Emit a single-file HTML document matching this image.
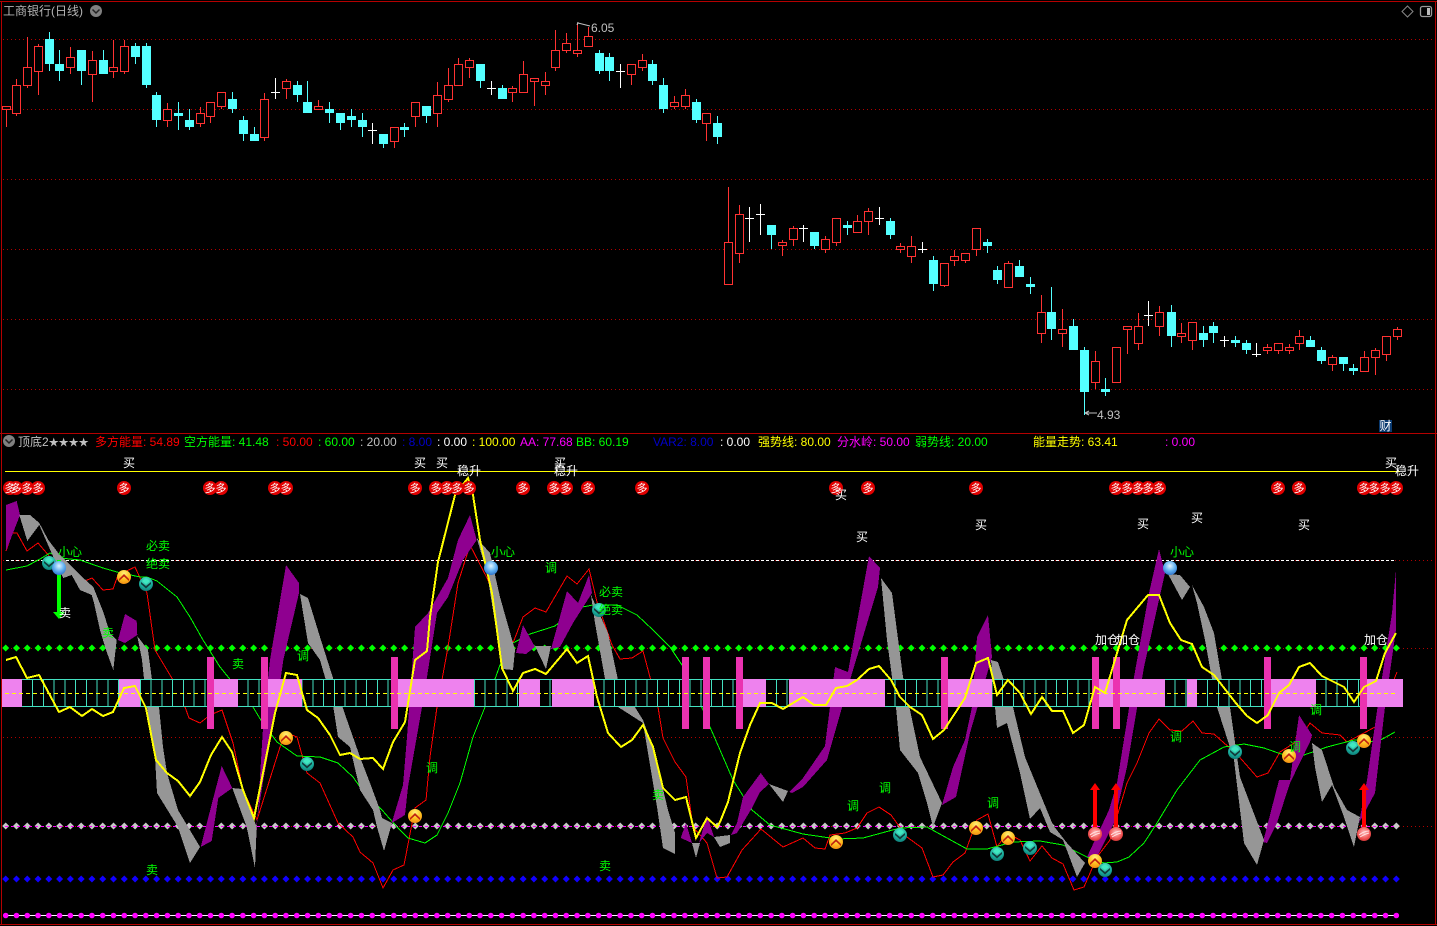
<!DOCTYPE html>
<html><head><meta charset="utf-8"><title>工商银行(日线)</title>
<style>
html,body{margin:0;padding:0;background:#000;width:1437px;height:926px;overflow:hidden}
svg{display:block;position:absolute;left:0;top:0}
text{font-family:"Liberation Sans","WenQuanYi Zen Hei","Noto Sans CJK SC",sans-serif;font-size:12px}
.m{text-anchor:middle}
</style></head><body>
<svg width="1437" height="926" viewBox="0 0 1437 926" xmlns="http://www.w3.org/2000/svg">
<defs>
<radialGradient id="go" cx=".5" cy=".25" r=".85"><stop offset="0" stop-color="#fff27a"/><stop offset=".5" stop-color="#ffc020"/><stop offset="1" stop-color="#f08010"/></radialGradient>
<radialGradient id="gt" cx=".5" cy=".25" r=".85"><stop offset="0" stop-color="#50e8c8"/><stop offset=".6" stop-color="#18a898"/><stop offset="1" stop-color="#0c6c6c"/></radialGradient>
<radialGradient id="gb" cx=".5" cy=".35" r=".75"><stop offset="0" stop-color="#e0f4ff"/><stop offset=".5" stop-color="#60b0f0"/><stop offset="1" stop-color="#2060c0"/></radialGradient>
<radialGradient id="gr" cx=".5" cy=".4" r=".75"><stop offset="0" stop-color="#ffc0c0"/><stop offset=".6" stop-color="#f05050"/><stop offset="1" stop-color="#b02020"/></radialGradient>
<g id="o"><circle r="7" fill="url(#go)"/><path d="M-5 2L0-3 5 2 5 4 0-.5-5 4z" fill="#c02010"/></g>
<g id="t"><circle r="7" fill="url(#gt)"/><path d="M-5-2L0 2 5-2 5 0 0 4.500-5 0z" fill="#123c3c"/><path d="M-4-3L0-5.500 4-3 0 0z" fill="#40e8c0"/></g>
<g id="b"><circle r="7" fill="url(#gb)"/></g>
<g id="r"><circle r="7" fill="url(#gr)"/><path d="M-5 1Q0-3 5-3M-4 3Q1 0 5-1" stroke="#ffe0e0" fill="none"/></g>

<path id="d10" d="M0-3.500l3.500 3.500-3.500 3.500-3.500-3.500zm10.780 0l3.500 3.500-3.500 3.500-3.500-3.500zm10.780 0l3.500 3.500-3.500 3.500-3.500-3.500zm10.780 0l3.500 3.500-3.500 3.500-3.500-3.500zm10.780 0l3.500 3.500-3.500 3.500-3.500-3.500zm10.780 0l3.500 3.500-3.500 3.500-3.500-3.500zm10.780 0l3.500 3.500-3.500 3.500-3.500-3.500zm10.780 0l3.500 3.500-3.500 3.500-3.500-3.500zm10.780 0l3.500 3.500-3.500 3.500-3.500-3.500zm10.780 0l3.500 3.500-3.500 3.500-3.500-3.500z"/>
<g id="drow"><use href="#d10" x="0"/><use href="#d10" x="107.800"/><use href="#d10" x="215.600"/><use href="#d10" x="323.400"/><use href="#d10" x="431.200"/><use href="#d10" x="539"/><use href="#d10" x="646.800"/><use href="#d10" x="754.600"/><use href="#d10" x="862.400"/><use href="#d10" x="970.200"/><use href="#d10" x="1078"/><use href="#d10" x="1185.800"/><use href="#d10" x="1293.600"/></g>

<g id="c10"><circle r="2.800"/><circle cx="10.780" r="2.800"/><circle cx="21.560" r="2.800"/><circle cx="32.340" r="2.800"/><circle cx="43.120" r="2.800"/><circle cx="53.900" r="2.800"/><circle cx="64.680" r="2.800"/><circle cx="75.460" r="2.800"/><circle cx="86.240" r="2.800"/><circle cx="97.020" r="2.800"/></g>
<g id="crow"><use href="#c10" x="0"/><use href="#c10" x="107.800"/><use href="#c10" x="215.600"/><use href="#c10" x="323.400"/><use href="#c10" x="431.200"/><use href="#c10" x="539"/><use href="#c10" x="646.800"/><use href="#c10" x="754.600"/><use href="#c10" x="862.400"/><use href="#c10" x="970.200"/><use href="#c10" x="1078"/><use href="#c10" x="1185.800"/><use href="#c10" x="1293.600"/></g>

<path id="v10" d="M0 0v28m10.780-28v28m10.780-28v28m10.780-28v28m10.780-28v28m10.780-28v28m10.780-28v28m10.780-28v28m10.780-28v28m10.780-28v28"/>
</defs>

<!-- grid -->
<g stroke="#b00000" stroke-width="1" stroke-dasharray="1 3" fill="none" shape-rendering="crispEdges">
<path d="M3 39.500H1434M3 109.500H1434M3 179.500H1434M3 249.500H1434M3 319.500H1434M3 389.500H1434"/>
<path d="M3 560.500H1434M3 648.500H1434M3 737.500H1434M3 826.500H1434"/>
</g>

<!-- borders -->
<g fill="#b40000" shape-rendering="crispEdges">
<rect x="0" y="1" width="1437" height="1"/>
<rect x="1" y="1" width="1" height="924"/>
<rect x="1435" y="1" width="1" height="924"/>
<rect x="0" y="433" width="1437" height="1"/>
<rect x="0" y="924" width="1437" height="1"/>
</g>

<!-- candles -->
<g shape-rendering="crispEdges" fill="none" stroke-width="1">
<path stroke="#ff3232" d="M6.500 106V127M16.500 79V116M27.500 37V88M38.500 44V95M70.500 47V74M92.500 51V102M113.500 40V78M124.500 40V74M167.500 103V127M200.500 107V127M210.500 102V123M221.500 92V109M264.500 93V141M286.500 79V99M318.500 100V110M394.500 127V148M415.500 102V127M437.500 82V127M448.500 68V102M458.500 58V86M469.500 58V78M512.500 86V102M523.500 61V93M534.500 78V106M545.500 72V95M555.500 30V71M566.500 33V53M577.500 24V57M588.500 27V47M631.500 64V85M642.500 54V71M674.500 96V109M685.500 89V109M706.500 113V141M728.500 187V285M739.500 205V263M782.500 240V256M793.500 226V246M825.500 236V253M836.500 218V246M857.500 215V233M868.500 208V235M900.500 243V253M911.500 236V263M944.500 263V287M954.500 250V266M965.500 253V263M976.500 228V256M1008.500 261V288M1041.500 295V343M1062.500 309V347M1095.500 351V389M1116.500 347V383M1127.500 326V354M1138.500 313V350M1159.500 306V336M1181.500 323V343M1192.500 322V350M1267.500 344V354M1278.500 343V354M1289.500 344V354M1299.500 330V350M1332.500 355V371M1364.500 351V372M1375.500 348V375M1386.500 336V361M1397.500 327V340"/>
<path stroke="#ff3232" fill="#000" d="M2.500 106.500h8v3h-8zM12.500 85.500h8v28h-8zM23.500 67.500h8v18h-8zM34.500 46.500h8v25h-8zM66.500 57.500h8v10h-8zM88.500 60.500h8v14h-8zM109.500 67.500h8v4h-8zM120.500 46.500h8v25h-8zM163.500 109.500h8v11h-8zM196.500 113.500h8v10h-8zM206.500 102.500h8v14h-8zM217.500 92.500h8v14h-8zM260.500 99.500h8v38h-8zM282.500 81.500h8v7h-8zM314.500 106.500h8v3h-8zM390.500 127.500h8v14h-8zM411.500 102.500h8v14h-8zM433.500 95.500h8v18h-8zM444.500 85.500h8v14h-8zM454.500 64.500h8v21h-8zM465.500 60.500h8v7h-8zM508.500 88.500h8v4h-8zM519.500 74.500h8v18h-8zM530.500 78.500h8v3h-8zM541.500 81.500h8v4h-8zM551.500 50.500h8v17h-8zM562.500 43.500h8v7h-8zM573.500 50.500h8v3h-8zM584.500 36.500h8v10h-8zM627.500 64.500h8v10h-8zM638.500 60.500h8v7h-8zM670.500 102.500h8v4h-8zM681.500 95.500h8v11h-8zM702.500 113.500h8v10h-8zM724.500 242.500h8v42h-8zM735.500 214.500h8v39h-8zM778.500 242.500h8v3h-8zM789.500 228.500h8v11h-8zM821.500 239.500h8v10h-8zM832.500 218.500h8v24h-8zM853.500 221.500h8v11h-8zM864.500 211.500h8v10h-8zM896.500 246.500h8v3h-8zM907.500 246.500h8v10h-8zM940.500 263.500h8v22h-8zM950.500 256.500h8v4h-8zM961.500 253.500h8v7h-8zM972.500 228.500h8v21h-8zM1004.500 263.500h8v24h-8zM1037.500 312.500h8v21h-8zM1058.500 329.500h8v4h-8zM1091.500 361.500h8v21h-8zM1112.500 347.500h8v35h-8zM1123.500 326.500h8v3h-8zM1134.500 326.500h8v17h-8zM1155.500 312.500h8v14h-8zM1177.500 333.500h8v3h-8zM1188.500 322.500h8v18h-8zM1263.500 347.500h8v3h-8zM1274.500 343.500h8v7h-8zM1285.500 347.500h8v3h-8zM1295.500 336.500h8v7h-8zM1328.500 357.500h8v7h-8zM1360.500 357.500h8v14h-8zM1371.500 350.500h8v7h-8zM1382.500 336.500h8v18h-8zM1393.500 329.500h8v7h-8z"/>
<path stroke="#54ffff" d="M49.500 32V71M59.500 50V81M81.500 50V85M103.500 50V74M135.500 43V64M146.500 43V88M156.500 92V127M178.500 102V130M189.500 109V130M232.500 92V113M243.500 116V141M254.500 127V141M297.500 81V102M307.500 81V113M329.500 102V123M340.500 113V130M351.500 109V127M362.500 113V137M383.500 134V148M404.500 123V137M426.500 106V123M480.500 64V88M502.500 85V99M599.500 50V74M609.500 53V81M652.500 60V85M663.500 78V113M696.500 99V123M717.500 116V144M771.500 225V249M814.500 232V249M847.500 221V235M890.500 218V239M933.500 256V291M987.500 239V253M997.500 266V284M1019.500 260V277M1030.500 277V294M1051.500 287V340M1073.500 319V350M1084.500 347V415M1105.500 378V396M1171.500 305V347M1203.500 326V347M1213.500 322V343M1235.500 336V347M1246.500 340V354M1310.500 336V347M1321.500 347V364M1343.500 357V371M1353.500 364V375"/>
<path fill="#54ffff" d="M45 39h9v25h-9zM55 64h9v7h-9zM77 50h9v21h-9zM99 60h9v14h-9zM131 46h9v11h-9zM142 46h9v39h-9zM152 95h9v25h-9zM174 113h9v3h-9zM185 120h9v7h-9zM228 99h9v10h-9zM239 120h9v14h-9zM250 134h9v7h-9zM293 85h9v10h-9zM303 102h9v11h-9zM325 109h9v4h-9zM336 113h9v10h-9zM347 116h9v4h-9zM358 120h9v7h-9zM379 134h9v10h-9zM400 127h9v3h-9zM422 106h9v10h-9zM476 64h9v17h-9zM498 88h9v11h-9zM595 53h9v18h-9zM605 57h9v14h-9zM648 64h9v17h-9zM659 85h9v24h-9zM692 102h9v18h-9zM713 123h9v14h-9zM767 225h9v10h-9zM810 232h9v14h-9zM843 225h9v3h-9zM886 221h9v14h-9zM929 260h9v24h-9zM983 242h9v4h-9zM993 270h9v10h-9zM1015 266h9v11h-9zM1026 284h9v3h-9zM1047 312h9v17h-9zM1069 326h9v24h-9zM1080 350h9v42h-9zM1101 389h9v3h-9zM1167 312h9v24h-9zM1199 333h9v7h-9zM1209 326h9v7h-9zM1231 340h9v3h-9zM1242 343h9v7h-9zM1306 340h9v7h-9zM1317 350h9v11h-9zM1339 357h9v7h-9zM1349 368h9v3h-9z"/>
<path stroke="#fff" d="M275.500 78V99M271 92.500h9M372.500 123V144M368 130.500h9M491.500 81V95M487 88.500h9M620.500 64V88M616 71.500h9M749.500 207V242M745 218.500h9M760.500 204V235M756 214.500h9M803.500 225V242M799 228.500h9M879.500 207V225M875 218.500h9M922.500 242V253M918 249.500h9M1148.500 301V326M1144 315.500h9M1224.500 336V347M1220 340.500h9M1256.500 343V357M1252 354.500h9"/>
</g>

<!-- hi / lo labels -->
<path d="M578 23L577 25M578 22l-1 3M578 23l12 3" stroke="#c0c0c0" fill="none"/>
<text x="591" y="32" fill="#c0c0c0">6.05</text>
<path d="M1085 413h12M1085 413l4-2M1085 413l4 2" stroke="#c0c0c0" fill="none"/>
<text x="1097" y="419" fill="#c0c0c0">4.93</text>

<!-- title -->
<text x="3" y="15" fill="#b4b4b4">工商银行(日线)</text>
<circle cx="96" cy="11" r="6" fill="#808080"/><path d="M92.500 9.500L96 13 99.500 9.500" stroke="#222" stroke-width="1.500" fill="none"/>
<path d="M1407.500 6L1413 11.500 1407.500 17 1402 11.500z" fill="none" stroke="#888"/>
<rect x="1420.500" y="6.500" width="11" height="10" rx="2" fill="none" stroke="#999" stroke-width="1.300"/><rect x="1427" y="8" width="3" height="7" fill="#bbb"/>

<!-- 财 badge -->
<rect x="1379" y="420" width="13" height="12" fill="#0a3a70"/>
<text x="1385.500" y="430" class="m" fill="#fff">财</text>

<!-- legend -->
<circle cx="9" cy="441" r="6" fill="#808080"/><path d="M5.500 439.500L9 443 12.500 439.500" stroke="#222" stroke-width="1.500" fill="none"/>
<g>
<text x="18" y="446" fill="#c0c0c0">顶底2<tspan style="font-size:10px">★★★★</tspan></text>
<text x="95" y="446" fill="#f00">多方能量: 54.89</text>
<text x="184" y="446" fill="#0f0">空方能量: 41.48</text>
<text x="276" y="446" fill="#f00">: 50.00</text>
<text x="318" y="446" fill="#0f0">: 60.00</text>
<text x="360" y="446" fill="#c0c0c0">: 20.00</text>
<text x="402" y="446" fill="#0000c8">: 8.00</text>
<text x="437" y="446" fill="#fff">: 0.00</text>
<text x="472" y="446" fill="#ff0">: 100.00</text>
<text x="520" y="446" fill="#f0f">AA: 77.68</text>
<text x="576" y="446" fill="#0f0">BB: 60.19</text>
<text x="653" y="446" fill="#0000c8">VAR2: 8.00</text>
<text x="720" y="446" fill="#fff">: 0.00</text>
<text x="758" y="446" fill="#ff0">强势线: 80.00</text>
<text x="837" y="446" fill="#f0f">分水岭: 50.00</text>
<text x="915" y="446" fill="#0f0">弱势线: 20.00</text>
<text x="1033" y="446" fill="#ff0">能量走势: 63.41</text>
<text x="1165" y="446" fill="#f0f">: 0.00</text>
</g>

<!-- lines and dots -->
<path d="M5 471.500H1400" stroke="#ff0" fill="none" shape-rendering="crispEdges"/>
<path d="M6 560.500H1396" stroke="#fff" stroke-dasharray="3 2" fill="none" shape-rendering="crispEdges"/>
<use href="#drow" x="5.700" y="648" fill="#0f0"/>
<use href="#drow" x="5.700" y="826" fill="#c8c8c8"/>
<path d="M5 826.500H1396" stroke="#f0f" stroke-dasharray="3 3" fill="none" shape-rendering="crispEdges"/>
<use href="#drow" x="5.700" y="879" fill="#10f"/>
<path d="M5 915.500H1396" stroke="#fff" fill="none" shape-rendering="crispEdges"/>
<use href="#crow" x="5.700" y="915.500" fill="#f0f"/>

<!-- thin red -->
<polyline fill="none" stroke="#f00" shape-rendering="crispEdges" points="6,551 12,533 17,533 27,551 38,543 50,557 58,570 68,570 80,583 92,578 103,590 113,589 118,575 135,567 147,593 155,650 173,680 185,707 189,718 200,723 210,715 222,710 233,743 243,790 257,820 280,747 287,733 297,737 307,773 320,783 338,823 353,837 360,852 373,863 383,888 393,870 404,865 415,808 426,800 430,757 437,707 448,647 458,583 470,545 487,578 513,643 523,617 535,608 546,612 567,576 577,584 589,569 597,602 612,645 620,659 632,658 643,651 658,707 663,738 675,762 686,777 693,827 707,843 717,878 727,877 742,850 761,829 783,847 803,838 815,848 825,849 830,835 845,833 857,828 867,813 879,807 891,815 907,837 922,848 933,877 943,875 953,862 965,853 977,820 988,814 997,847 1007,833 1020,840 1030,861 1042,846 1052,858 1063,864 1074,890 1084,887 1097,857 1110,840 1127,783 1137,763 1149,733 1159,719 1170,730 1182,731 1193,721 1202,733 1214,734 1224,743 1235,752 1257,777 1268,773 1280,752 1299,740 1310,723 1322,733 1340,735 1347,742 1364,733 1375,727 1397,672"/>
<!-- thin green -->
<polyline fill="none" stroke="#0f0" shape-rendering="crispEdges" points="6,570 27,566 40,559 50,553 60,558 80,560 103,568 117,572 140,577 147,577 157,581 177,597 190,617 203,640 220,667 233,683 253,707 262,722 277,742 297,756 320,757 338,763 353,777 360,787 382,810 397,827 408,838 425,843 437,835 448,813 460,783 473,737 485,707 500,665 513,643 530,634 555,626 577,608 593,605 617,605 637,615 653,630 670,647 682,665 703,710 710,727 720,750 733,780 752,810 770,825 803,834 837,839 863,838 900,828 927,827 947,838 967,849 987,849 1013,842 1040,841 1063,845 1077,852 1087,857 1104,863 1117,862 1129,857 1144,843 1157,823 1177,790 1200,760 1224,747 1244,744 1264,748 1284,755 1304,755 1327,747 1354,740 1377,742 1395,732"/>

<!-- clouds -->
<g fill="#8f0090" shape-rendering="crispEdges">
<polygon points="6,505 16.700,501 20,515 6,551"/>
<polygon points="118,640 125,614 136.700,621 137.300,635 125,643"/>
<polygon points="200.700,847 211.700,841 218.300,798 232.300,788 221.700,766 213.300,798"/>
<polygon points="256,842 263.300,723 270,660 286,565 299,583 299,593 283.300,660 276.700,707 263.300,780 256.700,823"/>
<polygon points="391.700,823 403,785 407,737 415,627 428,613 448,578 458,540 470,515 476.700,540 463,560 448,597 437,613 427,677 422,707 408,787 405,815"/>
<polygon points="516,653 523,625 535,647 526,654"/>
<polygon points="551,649 567,591 578,603 589,575 592,593 573,623 560,647"/>
<polygon points="680.700,838 686,823 692,843"/>
<polygon points="699,843 707,815 714,837 707,833"/>
<polygon points="731,835 737,823 743,797 760.700,773 769,784 760,792 752,808 737,833"/>
<polygon points="789,792 803,778 825,746 835,667 848,672 869,556 880,568 878,587 847,690 827,760 803,787 792,793"/>
<polygon points="942,805 956,797 970,733 992,657 988,615 977,637 972,707 965,740 953,767"/>
<polygon points="1087,857 1109,810 1117,783 1134,677 1149,593 1159,549 1165,573 1144,667 1127,767 1114,823 1097,857"/>
<polygon points="1263,842 1279,780 1290,780 1299,715 1312,735 1310,742 1290,783 1277,823 1267,843"/>
<polygon points="1359,823 1367,780 1379,697 1392,613 1396,570 1396,630 1385,707 1375,793"/>
</g>
<g fill="#969696" shape-rendering="crispEdges">
<polygon points="19.300,515 30,515 39.300,523 48.300,540 58.300,553 70,565 80,575 93.300,587 103.300,612 110,633 116.700,640 113.300,670 106,650 100,630 94,603 91.700,595 80,590 71.700,575 63.300,578 53.300,557 39.300,525 27.300,541"/>
<polygon points="137.300,636 148,650 152,680 159,707 163,747 167,773 178,810 200,847 190,863 178,827 157,793 155,757 147,707 142,660"/>
<polygon points="232.300,788 241.700,789 256.700,827 255,868 246.700,827"/>
<polygon points="300,594 308,598 320,637 333,678 347,720 360,757 370,783 380,810 382,818 392,823 384,851 377,827 373,810 360,790 350,747 338,737 333,705 320,660 308,643"/>
<polygon points="476.700,538 490,553 500,597 515,650 513,670 503,669 495,623 487,573"/>
<polygon points="535,646 551,646 546,669"/>
<polygon points="591,595 608,633 618,680 643,720 653,747 668,810 675,833 675,854 663,848 657,807 643,723 618,707 605,679 595,623"/>
<polygon points="692,843 700,843 696,858"/>
<polygon points="714,837 730,835 730,843 720,847"/>
<polygon points="769,784 788,791 783,802"/>
<polygon points="881,578 892,593 903,677 920,757 942,803 933,827 927,803 918,773 900,750 896,707 887,640"/>
<polygon points="991,660 998,662 1013,707 1025,757 1053,825 1067,843 1085,863 1077,877 1063,840 1050,832 1040,808 1030,819 1020,773 1007,723 997,728 995,707"/>
<polygon points="1168,574 1180,575 1190,587 1182,600"/>
<polygon points="1192,585 1204,607 1214,633 1222,680 1230,707 1240,777 1264,840 1257,865 1244,843 1234,760 1217,707 1205,640 1197,603"/>
<polygon points="1312,743 1322,750 1334,787 1347,810 1360,817 1354,847 1344,817 1332,785 1322,802 1315,767"/>
</g>

<!-- band -->
<rect x="2" y="679" width="1401" height="28" fill="#000"/>
<g stroke="#44e0c0" fill="none" shape-rendering="crispEdges">
<use href="#v10" x="21.700" y="679"/><use href="#v10" x="129.500" y="679"/><use href="#v10" x="237.300" y="679"/><use href="#v10" x="345.100" y="679"/><use href="#v10" x="452.900" y="679"/><use href="#v10" x="560.700" y="679"/><use href="#v10" x="668.500" y="679"/><use href="#v10" x="776.300" y="679"/><use href="#v10" x="884.100" y="679"/><use href="#v10" x="991.900" y="679"/><use href="#v10" x="1099.700" y="679"/><use href="#v10" x="1207.500" y="679"/><use href="#v10" x="1315.300" y="679"/>
<path d="M2 679.500H1403M2 706.500H1403"/>
</g>
<rect x="1403" y="678" width="31" height="30" fill="#000"/>
<g fill="#ee82ee" shape-rendering="crispEdges">
<rect x="2" y="679" width="20" height="28"/><rect x="119" y="679" width="21" height="28"/><rect x="214" y="679" width="24" height="28"/><rect x="268" y="679" width="34" height="28"/><rect x="398" y="679" width="76" height="28"/><rect x="519" y="679" width="21" height="28"/><rect x="552" y="679" width="42" height="28"/><rect x="743" y="679" width="23" height="28"/><rect x="789" y="679" width="96" height="28"/><rect x="948" y="679" width="44" height="28"/><rect x="1099" y="679" width="14" height="28"/><rect x="1120" y="679" width="45" height="28"/><rect x="1187" y="679" width="10" height="28"/><rect x="1271" y="679" width="45" height="28"/><rect x="1367" y="679" width="36" height="28"/>
</g>
<g fill="#ea32b0" shape-rendering="crispEdges">
<rect x="207" y="657" width="7" height="72"/><rect x="261" y="657" width="7" height="72"/><rect x="391" y="657" width="7" height="72"/><rect x="682" y="657" width="7" height="72"/><rect x="703" y="657" width="7" height="72"/><rect x="736" y="657" width="7" height="72"/><rect x="941" y="657" width="7" height="72"/><rect x="1092" y="657" width="7" height="72"/><rect x="1113" y="657" width="7" height="72"/><rect x="1264" y="657" width="7" height="72"/><rect x="1360" y="657" width="7" height="72"/>
</g>
<path d="M5 693.500H1396" stroke="#ff0" stroke-dasharray="4 3" fill="none" shape-rendering="crispEdges"/>

<!-- yellow line -->
<polyline fill="none" stroke="#ff0" stroke-width="2" shape-rendering="crispEdges" points="6,660 16,657 27,678 39,675 59,712 70,707 82,716 92,709 103,716 113,712 124,688 135,686 146,708 156,760 167,773 178,781 190,796 200,782 211,755 222,737 232,752 243,790 254,818 263,773 275,713 286,673 297,675 307,710 318,718 330,735 340,755 350,753 360,759 373,758 383,769 393,742 405,722 415,660 427,651 430,617 438,562 455,495 468,478 473,495 480,540 492,593 502,668 513,691 523,673 535,669 546,674 567,649 577,663 588,656 597,697 608,733 621,747 632,740 643,725 653,747 663,788 675,800 686,797 696,838 707,818 717,827 720,822 728,802 740,753 750,725 760,703 772,703 783,709 803,697 814,705 826,705 836,688 847,686 857,680 869,669 879,666 891,680 900,697 910,707 922,715 933,739 944,730 965,698 976,663 988,658 997,695 1008,680 1020,693 1031,714 1042,697 1052,711 1063,711 1073,733 1084,725 1095,687 1105,693 1127,620 1148,595 1159,595 1170,623 1181,640 1192,644 1202,667 1214,675 1235,702 1247,716 1257,723 1268,715 1279,693 1289,685 1299,667 1310,663 1322,676 1344,687 1354,702 1364,687 1376,681 1385,653 1396,633"/>

<!-- 多 badges -->
<g fill="#e00000">
<ellipse cx="10" cy="488" rx="7" ry="7"/><ellipse cx="16" cy="488" rx="7" ry="7"/><ellipse cx="27" cy="488" rx="7" ry="7"/><ellipse cx="38" cy="488" rx="7" ry="7"/><ellipse cx="124" cy="488" rx="7" ry="7"/><ellipse cx="210" cy="488" rx="7" ry="7"/><ellipse cx="221" cy="488" rx="7" ry="7"/><ellipse cx="275" cy="488" rx="7" ry="7"/><ellipse cx="286" cy="488" rx="7" ry="7"/><ellipse cx="415" cy="488" rx="7" ry="7"/><ellipse cx="436" cy="488" rx="7" ry="7"/><ellipse cx="447" cy="488" rx="7" ry="7"/><ellipse cx="457" cy="488" rx="7" ry="7"/><ellipse cx="469" cy="488" rx="7" ry="7"/><ellipse cx="523" cy="488" rx="7" ry="7"/><ellipse cx="554" cy="488" rx="7" ry="7"/><ellipse cx="566" cy="488" rx="7" ry="7"/><ellipse cx="588" cy="488" rx="7" ry="7"/><ellipse cx="642" cy="488" rx="7" ry="7"/><ellipse cx="836" cy="488" rx="7" ry="7"/><ellipse cx="868" cy="488" rx="7" ry="7"/><ellipse cx="976" cy="488" rx="7" ry="7"/><ellipse cx="1116" cy="488" rx="7" ry="7"/><ellipse cx="1127" cy="488" rx="7" ry="7"/><ellipse cx="1138" cy="488" rx="7" ry="7"/><ellipse cx="1148" cy="488" rx="7" ry="7"/><ellipse cx="1159" cy="488" rx="7" ry="7"/><ellipse cx="1278" cy="488" rx="7" ry="7"/><ellipse cx="1299" cy="488" rx="7" ry="7"/><ellipse cx="1364" cy="488" rx="7" ry="7"/><ellipse cx="1374" cy="488" rx="7" ry="7"/><ellipse cx="1385" cy="488" rx="7" ry="7"/><ellipse cx="1396" cy="488" rx="7" ry="7"/>
</g>
<text y="492" fill="#fff" style="font-size:11px" x="4.500 10.500 21.500 32.500 118.500 204.500 215.500 269.500 280.500 409.500 430.500 441.500 451.500 463.500 517.500 548.500 560.500 582.500 636.500 830.500 862.500 970.500 1110.500 1121.500 1132.500 1142.500 1153.500 1272.500 1293.500 1358.500 1368.500 1379.500 1390.500">多多多多多多多多多多多多多多多多多多多多多多多多多多多多多多多多多</text>

<!-- arrows -->
<path d="M57 560h4v52h4l-6 7-6-7h4z" fill="#0f0"/>
<path d="M1093 828V790h-3l5-7 5 7h-3v38zM1114 828V790h-3l5-7 5 7h-3v38zM1362 828V790h-3l5-7 5 7h-3v38z" fill="#f00"/>

<!-- ball markers -->
<use href="#t" x="49" y="563"/><use href="#b" x="59" y="568"/>
<use href="#o" x="124" y="577"/><use href="#t" x="146" y="584"/><use href="#o" x="286" y="738"/><use href="#t" x="307" y="764"/><use href="#o" x="415" y="816"/><use href="#b" x="491" y="568"/><use href="#t" x="599" y="610"/><use href="#o" x="836" y="842"/><use href="#t" x="900" y="835"/><use href="#o" x="976" y="828"/><use href="#t" x="997" y="854"/><use href="#o" x="1008" y="838"/><use href="#t" x="1030" y="848"/><use href="#r" x="1095" y="834"/><use href="#r" x="1116" y="834"/><use href="#o" x="1095" y="861"/><use href="#t" x="1105" y="870"/><use href="#b" x="1170" y="568"/><use href="#t" x="1235" y="752"/><use href="#o" x="1289" y="756"/><use href="#t" x="1353" y="748"/><use href="#o" x="1364" y="741"/><use href="#r" x="1364" y="834"/>

<!-- white labels -->
<g fill="#fff" class="m">
<text x="129" y="467">买</text><text x="420" y="467">买</text><text x="442" y="467">买</text><text x="560" y="467">买</text><text x="1391" y="467">买</text>
<text x="469" y="475">稳升</text><text x="566" y="475">稳升</text><text x="1407" y="475">稳升</text>
<text x="841" y="499">买</text><text x="862" y="541">买</text><text x="981" y="529">买</text><text x="1143" y="528">买</text><text x="1197" y="522">买</text><text x="1304" y="529">买</text>
<text x="65" y="617">卖</text>
<text x="1107" y="644">加仓</text><text x="1128" y="644">加仓</text><text x="1376" y="644">加仓</text>
</g>
<!-- green labels -->
<g fill="#0f0" class="m">
<text x="70" y="556">小心</text><text x="503" y="556">小心</text><text x="1182" y="556">小心</text>
<text x="158" y="550">必卖</text><text x="158" y="568">绝卖</text><text x="611" y="596">必卖</text><text x="611" y="614">绝卖</text>
<text x="108" y="637">卖</text><text x="238" y="668">卖</text><text x="152" y="874">卖</text><text x="605" y="870">卖</text><text x="658" y="799">卖</text>
<text x="303" y="660">调</text><text x="432" y="772">调</text><text x="551" y="572">调</text><text x="853" y="810">调</text><text x="885" y="792">调</text><text x="993" y="807">调</text><text x="1176" y="741">调</text><text x="1295" y="751">调</text><text x="1316" y="714">调</text>
</g>
</svg>
</body></html>
